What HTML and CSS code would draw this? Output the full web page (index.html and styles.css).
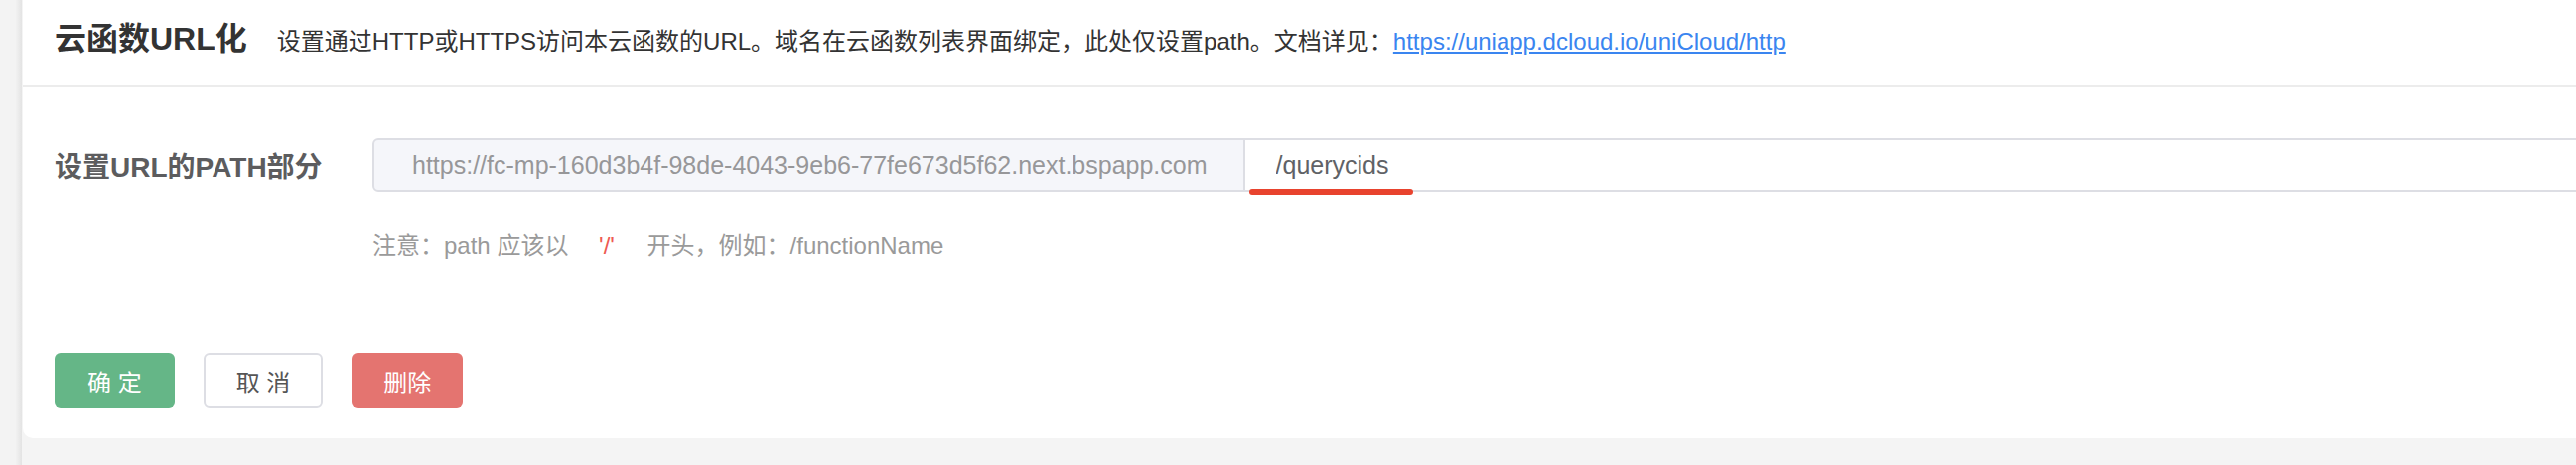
FILE: index.html
```html
<!DOCTYPE html>
<html lang="zh-CN">
<head>
    <meta charset="UTF-8">
    <meta name="viewport" content="width=device-width, initial-scale=1.0">
    <title>云函数URL化</title>
    <link rel="stylesheet" href="styles.css">
</head>
<body>
    <div class="layout">
        <div class="side"></div>

        <div class="main">
            <div class="card">
                <!-- header: title + description -->
                <div class="card-head">
                    <h2 class="title">云函数URL化</h2>
                    <p class="desc">设置通过HTTP或HTTPS访问本云函数的URL。域名在云函数列表界面绑定，此处仅设置path。文档详见：<a href="#">https://uniapp.dcloud.io/uniCloud/http</a></p>
                </div>

                <div class="card-body">
                    <div class="form-row">
                        <label class="form-label">设置URL的PATH部分</label>
                        <div class="input-group">
                            <span class="input-prefix">https://fc-mp-160d3b4f-98de-4043-9eb6-77fe673d5f62.next.bspapp.com</span>
                            <div class="input-wrap">
                                <input class="input" type="text" value="/querycids">
                                <span class="mark"></span>
                            </div>
                        </div>
                    </div>

                    <p class="hint">注意：path 应该以 <code>'/'</code> 开头，例如：/functionName</p>

                    <div class="actions">
                        <button class="btn btn-primary">确 定</button>
                        <button class="btn btn-default">取 消</button>
                        <button class="btn btn-danger">删除</button>
                    </div>
                </div>
            </div>
        </div>
    </div>
</body>
</html>
```

FILE: styles.css
```css
html, body {
    margin: 0;
    height: 100%;
    overflow: hidden;
}

body {
    font-family: "Liberation Sans", "Noto Sans CJK SC", sans-serif;
    background-color: #f4f4f4;
    color: #333;
}

.layout {
    display: flex;
    height: 100%;
}

/* thin panel edge on the left */
.side {
    width: 22px;
    flex-shrink: 0;
    background: linear-gradient(to right, #f3f3f3 70%, #e3e3e3);
}

.main {
    flex: 1;
    padding-left: 1px;
    margin-right: -40px; /* card runs past the right edge */
}

.card {
    background-color: #fff;
    border-bottom-left-radius: 10px;
    padding-bottom: 30px;
}

.card-head {
    height: 88px;
    box-sizing: border-box;
    padding: 17px 0 0 32px;
    display: flex;
    align-items: baseline;
    border-bottom: 2px solid #ececec;
}

.title {
    margin: 0;
    font-size: 32px;
    line-height: 44px;
    font-weight: bold;
    color: #333;
}

.desc {
    margin: 0 0 0 30px;
    font-size: 24px;
    color: #333;
}

.desc a {
    color: #3a85f0;
    text-decoration: underline;
}

.card-body {
    padding: 51px 0 0 32px;
}

.form-row {
    display: flex;
    align-items: center;
}

.form-label {
    width: 320px;
    flex-shrink: 0;
    font-size: 28px;
    font-weight: bold;
    color: #5c5c5e;
}

.input-group {
    flex: 1;
    display: flex;
    height: 54px;
}

.input-prefix {
    display: flex;
    align-items: center;
    box-sizing: border-box;
    padding: 0 36px 0 38px;
    background-color: #f5f6fa;
    border: 2px solid #dddee4;
    border-radius: 6px 0 0 6px;
    font-size: 25px;
    color: #979799;
    white-space: nowrap;
}

.input-wrap {
    flex: 1;
    position: relative;
    border: 2px solid #dddee4;
    border-left: none;
}

.input {
    width: 100%;
    height: 100%;
    box-sizing: border-box;
    border: none;
    outline: none;
    padding: 0 0 0 31px;
    font-family: inherit;
    font-size: 25px;
    color: #606266;
    background: transparent;
}

/* red annotation under the value */
.mark {
    position: absolute;
    left: 4px;
    bottom: -5px;
    width: 165px;
    height: 6px;
    border-radius: 3px;
    background-color: #e8432e;
}

.hint {
    margin: 38px 0 0 320px;
    font-size: 24px;
    line-height: 34px;
    color: #9a9a9a;
}

.hint code {
    font-family: inherit;
    color: #ee5a52;
    padding: 0 26px 0 24px;
}

.actions {
    display: flex;
    gap: 29px;
    margin-top: 90px;
}

.btn {
    height: 56px;
    box-sizing: border-box;
    padding: 0 30px;
    border: 2px solid transparent;
    border-radius: 6px;
    font-family: inherit;
    font-size: 24px;
    cursor: pointer;
}

.btn-primary {
    background-color: #65b687;
    color: #fff;
    padding: 0 31px;
}

.btn-default {
    background-color: #fff;
    border-color: #dddee4;
    color: #555;
    padding: 0 31px;
}

.btn-danger {
    background-color: #e47470;
    color: #fff;
}
```
